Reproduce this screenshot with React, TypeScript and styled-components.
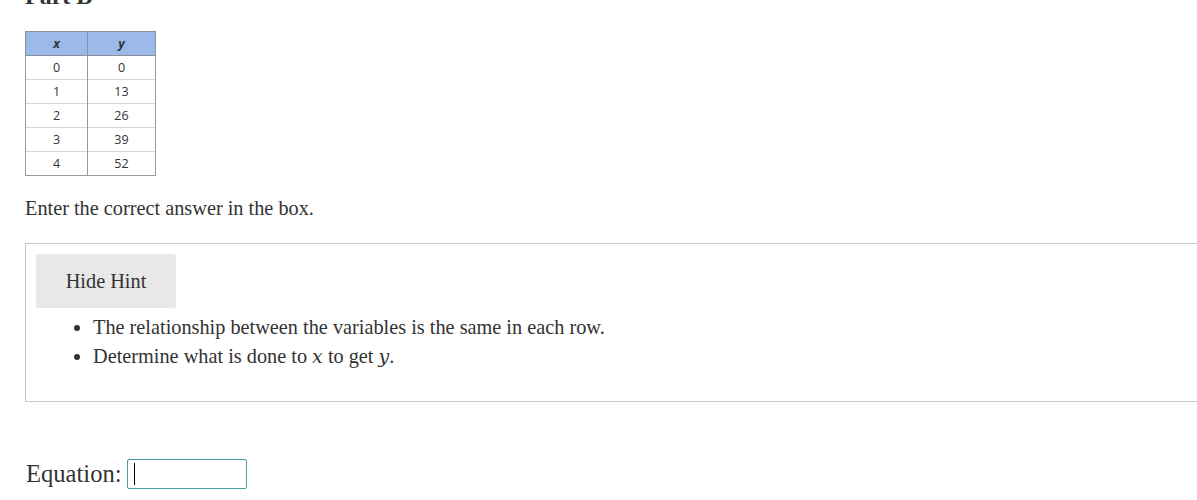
import React from 'react'
import styled, { createGlobalStyle } from 'styled-components'

const GlobalStyle = createGlobalStyle`
    html, body {
        margin: 0;
        padding: 0;
        background: #ffffff;
        overflow: hidden;
    }
    body {
        font-family: "Liberation Serif", "Times New Roman", serif;
        color: #333333;
    }
`

const rows: [number, number][] = [
    [0, 0],
    [1, 13],
    [2, 26],
    [3, 39],
    [4, 52],
]

export default function App() {
    return (
        <>
            <GlobalStyle />
            <Page>
                <PartTitle>Part B</PartTitle>
                <ValueTable>
                    <thead>
                        <tr>
                            <HeadCell $width={62}>x</HeadCell>
                            <HeadCell $width={68}>y</HeadCell>
                        </tr>
                    </thead>
                    <tbody>
                        {rows.map(([x, y]) => (
                            <tr key={x}>
                                <BodyCell>{x}</BodyCell>
                                <BodyCell>{y}</BodyCell>
                            </tr>
                        ))}
                    </tbody>
                </ValueTable>
                <Prompt>Enter the correct answer in the box.</Prompt>
                <HintBox>
                    <HintButton type="button">Hide Hint</HintButton>
                    <HintList>
                        <HintItem>The relationship between the variables is the same in each row.</HintItem>
                        <HintItem>
                            Determine what is done to <MathVar>x</MathVar> to get <MathVar>y</MathVar>.
                        </HintItem>
                    </HintList>
                </HintBox>
                <AnswerRow>
                    <AnswerLabel>Equation:</AnswerLabel>
                    <InputWrap>
                        <AnswerInput aria-label="Equation" />
                        <Caret />
                    </InputWrap>
                </AnswerRow>
            </Page>
        </>
    )
}

const Page = styled.div`
    padding-left: 25px;
    margin-top: -19px;
`

const PartTitle = styled.h3`
    margin: 0 0 20px 0;
    font-size: 24px;
    line-height: 30px;
    font-weight: 700;
    color: #333333;
`

const ValueTable = styled.table`
    border-collapse: collapse;
    font-family: "Open Sans", "Noto Sans", sans-serif;
    font-size: 12.5px;
    color: #333333;
    border: 1px solid #9a9a9a;
`

const HeadCell = styled.th<{ $width: number }>`
    width: ${p => p.$width - 1}px;
    height: 23px;
    padding: 0;
    background: #9bb9e9;
    border: 1px solid #8a8f99;
    font-style: italic;
    font-weight: 700;
    text-align: center;
`

const BodyCell = styled.td`
    height: 23px;
    padding: 0;
    text-align: center;
    border-left: 1px solid #9a9a9a;
    border-right: 1px solid #9a9a9a;
    border-top: 1px solid #d6d6d6;
`

const Prompt = styled.p`
    margin: 20px 0 23px 0;
    font-size: 20.3px;
    line-height: 24px;
`

const HintBox = styled.div`
    width: 1200px;
    border: 1px solid #c8c8c8;
    padding: 10px 10px 30px 10px;
`

const HintButton = styled.button`
    display: block;
    width: 140px;
    height: 54px;
    border: none;
    border-radius: 3px;
    background: #e8e8e8;
    font-family: "Liberation Serif", "Times New Roman", serif;
    font-size: 20.3px;
    color: #333333;
    cursor: pointer;
`

const HintList = styled.ul`
    margin: 5px 0 0 0;
    padding-left: 57px;
    font-size: 20.3px;
    line-height: 29px;
`

const HintItem = styled.li``

const MathVar = styled.span`
    font-family: "DejaVu Serif", "Liberation Serif", serif;
    font-style: italic;
    font-size: 19px;
`

const AnswerRow = styled.div`
    display: flex;
    align-items: center;
    gap: 5px;
    margin-top: 57px;
`

const AnswerLabel = styled.span`
    font-size: 24.6px;
    padding-left: 1px;
`

const InputWrap = styled.span`
    position: relative;
    display: inline-flex;
`

const AnswerInput = styled.input`
    width: 120px;
    height: 30px;
    box-sizing: border-box;
    border: 1px solid #4c9ea6;
    border-radius: 2px;
    outline: none;
    padding: 0 6px;
    font-size: 19px;
`

const Caret = styled.span`
    position: absolute;
    left: 7px;
    top: 4px;
    width: 1px;
    height: 22px;
    background: #000000;
`
